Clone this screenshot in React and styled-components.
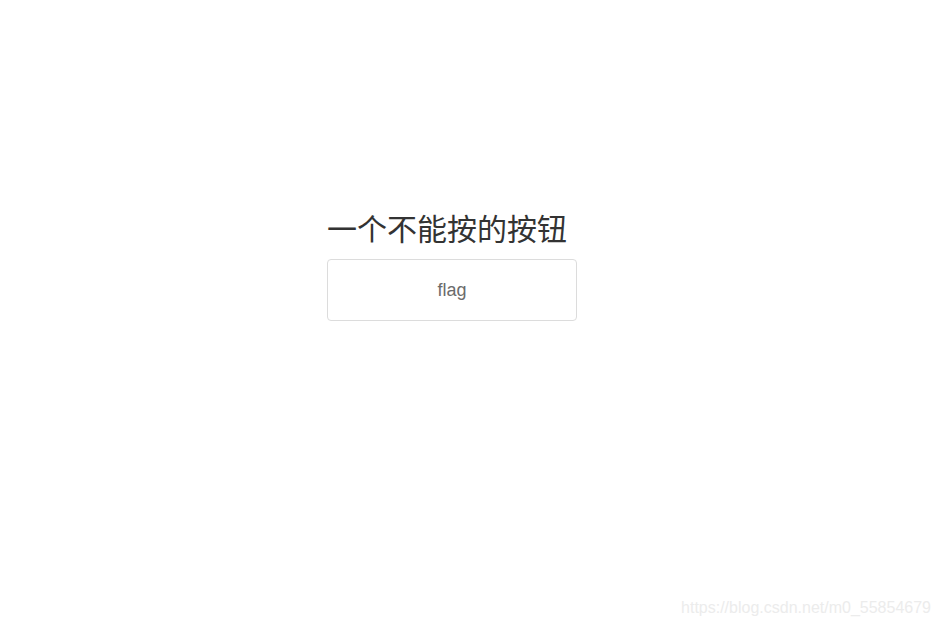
import React from 'react'
import styled, { createGlobalStyle } from 'styled-components'

const GlobalStyle = createGlobalStyle`
	html, body {
		margin: 0;
		padding: 0;
		background: #fff;
	}
	body {
		font-family: "Liberation Sans", "Noto Sans CJK SC", sans-serif;
	}
`

const Page = styled.div`
	position: relative;
	width: 940px;
	height: 625px;
	overflow: hidden;
`

const Content = styled.div`
	display: flex;
	flex-direction: column;
	align-items: flex-start;
	gap: 12px;
	padding: 207px 0 0 327px;
`

const Title = styled.h1`
	margin: 0;
	font-family: "Noto Sans CJK SC", sans-serif;
	font-size: 30px;
	font-weight: 400;
	line-height: 40px;
	color: #333;
`

const FlagButton = styled.button`
	width: 250px;
	height: 62px;
	border: 1px solid #dcdcdc;
	border-radius: 4px;
	background: #fff;
	color: #6b6b6b;
	font-family: "Liberation Sans", Arial, sans-serif;
	font-size: 18px;
	cursor: not-allowed;
`

// csdn watermark sits over the page
const Watermark = styled.span`
	position: absolute;
	right: 9px;
	bottom: 8px;
	font-family: "Liberation Sans", Arial, sans-serif;
	font-size: 16px;
	color: #ececec;
`

const App = () => (
	<>
		<GlobalStyle />
		<Page>
			<Content>
				<Title>一个不能按的按钮</Title>
				<FlagButton>flag</FlagButton>
			</Content>
			<Watermark>https://blog.csdn.net/m0_55854679</Watermark>
		</Page>
	</>
)

export default App
